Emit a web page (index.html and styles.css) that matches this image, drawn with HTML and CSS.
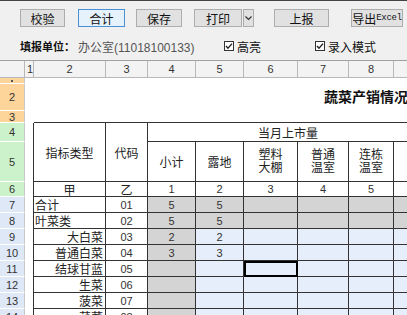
FILE: index.html
```html
<!DOCTYPE html>
<html>
<head>
  <meta charset="UTF-8">
  <title>蔬菜产销情况表</title>
  <link rel="stylesheet" href="styles.css">
</head>
<body>
  <div class="toolbar">
    <div class="btn-row">
      <button class="btn w-check">校验</button>
      <button class="btn active w-sum">合计</button>
      <button class="btn w-save">保存</button>
      <button class="btn w-print">打印</button>
      <button class="btn w-drop"><svg width="7" height="5" viewBox="0 0 7 5"><path d="M0.5 0.5 L3.5 3.5 L6.5 0.5" fill="none" stroke="#333" stroke-width="1.2"/></svg></button>
      <button class="btn w-report">上报</button>
      <button class="btn w-export">导出<span class="mono">Excel</span></button>
    </div>
    <div class="info-row">
      <span class="unit-label">填报单位：</span>
      <span class="unit-name">办公室(11018100133)</span>
      <span class="chk chk-hl"><svg width="10" height="10" viewBox="0 0 10 10"><rect x="0.5" y="0.5" width="9" height="9" fill="#fff" stroke="#333"/><path d="M2 5 L4 7.2 L8 2.6" fill="none" stroke="#222" stroke-width="1.4"/></svg>高亮</span>
      <span class="chk"><svg width="10" height="10" viewBox="0 0 10 10"><rect x="0.5" y="0.5" width="9" height="9" fill="#fff" stroke="#333"/><path d="M2 5 L4 7.2 L8 2.6" fill="none" stroke="#222" stroke-width="1.4"/></svg>录入模式</span>
    </div>
  </div>

  <div class="sheet">
    <!-- заголовки столбцов -->
    <div class="ch corner"></div>
    <div class="ch ch-first">1</div>
    <div class="ch">2</div>
    <div class="ch">3</div>
    <div class="ch">4</div>
    <div class="ch">5</div>
    <div class="ch">6</div>
    <div class="ch">7</div>
    <div class="ch">8</div>
    <div class="ch"></div>

    <!-- строки 1-3 над таблицей -->
    <div class="rh orange tiny"></div>
    <div class="gap-col top"></div>
    <div class="blank span-all"></div>
    <div class="rh orange">2</div>
    <div class="title span-all">蔬菜产销情况</div>
    <div class="rh orange">3</div>
    <div class="blank span-all table-top"></div>

    <!-- шапка таблицы -->
    <div class="rh green">4</div>
    <div class="gap-col body"></div>
    <div class="c head-2">指标类型</div>
    <div class="c head-2">代码</div>
    <div class="c month">当月上市量</div>
    <div class="rh green">5</div>
    <div class="c">小计</div>
    <div class="c">露地</div>
    <div class="c two">塑料<br>大棚</div>
    <div class="c two">普通<br>温室</div>
    <div class="c two">连栋<br>温室</div>
    <div class="c"></div>
    <div class="rh green">6</div>
    <div class="c">甲</div>
    <div class="c">乙</div>
    <div class="c num">1</div>
    <div class="c num">2</div>
    <div class="c num">3</div>
    <div class="c num">4</div>
    <div class="c num">5</div>
    <div class="c"></div>

    <!-- данные -->
    <div class="rh blue">7</div>
    <div class="c l">合计</div>
    <div class="c num">01</div>
    <div class="c num g">5</div>
    <div class="c num g">5</div>
    <div class="c g"></div>
    <div class="c g"></div>
    <div class="c g"></div>
    <div class="c g"></div>

    <div class="rh blue">8</div>
    <div class="c l">叶菜类</div>
    <div class="c num">02</div>
    <div class="c num g">5</div>
    <div class="c num g">5</div>
    <div class="c g"></div>
    <div class="c g"></div>
    <div class="c g"></div>
    <div class="c g"></div>

    <div class="rh blue">9</div>
    <div class="c r">大白菜</div>
    <div class="c num">03</div>
    <div class="c num g">2</div>
    <div class="c num b">2</div>
    <div class="c b"></div>
    <div class="c b"></div>
    <div class="c b"></div>
    <div class="c b"></div>

    <div class="rh blue">10</div>
    <div class="c r">普通白菜</div>
    <div class="c num">04</div>
    <div class="c num g">3</div>
    <div class="c num b">3</div>
    <div class="c b"></div>
    <div class="c b"></div>
    <div class="c b"></div>
    <div class="c b"></div>

    <div class="rh blue">11</div>
    <div class="c r">结球甘蓝</div>
    <div class="c num">05</div>
    <div class="c g"></div>
    <div class="c b"></div>
    <div class="c b selected"></div>
    <div class="c b"></div>
    <div class="c b"></div>
    <div class="c b"></div>

    <div class="rh blue">12</div>
    <div class="c r">生菜</div>
    <div class="c num">06</div>
    <div class="c g"></div>
    <div class="c b"></div>
    <div class="c b"></div>
    <div class="c b"></div>
    <div class="c b"></div>
    <div class="c b"></div>

    <div class="rh blue">13</div>
    <div class="c r">菠菜</div>
    <div class="c num">07</div>
    <div class="c g"></div>
    <div class="c b"></div>
    <div class="c b"></div>
    <div class="c b"></div>
    <div class="c b"></div>
    <div class="c b"></div>

    <div class="rh blue">14</div>
    <div class="c r">芹菜</div>
    <div class="c num">08</div>
    <div class="c g"></div>
    <div class="c b"></div>
    <div class="c b"></div>
    <div class="c b"></div>
    <div class="c b"></div>
    <div class="c b"></div>
  </div>
</body>
</html>
```

FILE: styles.css
```css
/* Общие стили */
* {
  box-sizing: border-box;
}

body {
  margin: 0;
  width: 407px;
  height: 315px;
  overflow: hidden;
  font-family: "Liberation Sans", "Noto Sans CJK SC", sans-serif;
  font-size: 12px;
  color: #222;
  background-color: #fff;
}

/* Панель кнопок */
.toolbar {
  height: 60px;
  background-color: #f0f0f0;
  border-top: 1px solid #444;
}

.btn-row {
  display: flex;
  padding: 8px 0 0 20px;
}

.btn {
  display: flex;
  align-items: center;
  justify-content: center;
  height: 18px;
  padding: 0;
  border: 1px solid #adadad;
  background-color: #e1e1e1;
  font-family: inherit;
  font-size: 12px;
  color: #111;
}

.btn.active {
  border-color: #4a90d9;
  background-color: #e5f1fb;
}

.w-check { width: 45px; }
.w-sum { width: 47px; margin-left: 13px; }
.w-save { width: 46px; margin-left: 11px; }
.w-print { width: 48px; margin-left: 12px; }
.w-drop { width: 11px; margin-left: 1px; }
.w-report { width: 55px; margin-left: 20px; }
.w-export { width: 52px; margin-left: 22px; }

.mono {
  font-family: "Liberation Mono", monospace;
  font-size: 9px;
  letter-spacing: -0.3px;
}

.info-row {
  display: flex;
  align-items: center;
  height: 16px;
  margin-top: 11px;
  padding-left: 20px;
  white-space: nowrap;
}

.unit-label {
  width: 58px;
  font-size: 11px;
  font-weight: bold;
  color: #111;
}

.unit-name {
  width: 146px;
  color: #555;
}

.chk {
  display: flex;
  align-items: center;
  gap: 3px;
  color: #111;
}

.chk-hl {
  width: 91px;
}

/* Лист */
.sheet {
  display: grid;
  grid-template-columns: 25px 9px 72px 42px 48px 48px 54px 51px 45px 35px;
  grid-template-rows: 17px 6px 27px 12px 19px 40px 15px repeat(8, 16px);
  border-top: 1px solid #a0a0a0;
}

.ch {
  display: flex;
  align-items: center;
  justify-content: center;
  background-color: #f3f3f3;
  border-right: 1px solid #b8b8b8;
  border-bottom: 1px solid #b8b8b8;
  font-size: 11px;
  color: #333;
}

.ch-first {
  justify-content: flex-start;
  padding-left: 2px;
}

.rh {
  display: flex;
  align-items: center;
  justify-content: center;
  border-right: 1px solid #c8c8c8;
  border-bottom: 1px solid #fff;
  font-size: 11px;
  color: #333;
  overflow: hidden;
}

.rh.tiny::after {
  content: "";
  width: 2px;
  height: 2px;
  background-color: #555;
}

.orange { background-color: #fdd49a; }
.green { background-color: #ccf2cc; }
.blue { background-color: #dfe8f6; }

.gap-col.top {
  grid-row: span 3;
}

.gap-col.body {
  grid-row: span 11;
  border-right: 1px solid #333;
}

.span-all {
  grid-column: span 8;
}

.table-top {
  border-bottom: 1px solid #333;
}

.title {
  padding-left: 290px;
  line-height: 27px;
  font-size: 14px;
  font-weight: bold;
  white-space: nowrap;
  color: #111;
}

/* Ячейки таблицы */
.c {
  display: flex;
  align-items: center;
  justify-content: center;
  border-right: 1px solid #333;
  border-bottom: 1px solid #333;
  color: #222;
  white-space: nowrap;
}

.c.head-2 {
  grid-row: span 2;
}

.c.month {
  grid-column: span 6;
}

.c.two {
  line-height: 13px;
  text-align: center;
}

.c.num {
  font-size: 11px;
  color: #333;
}

.c.l {
  justify-content: flex-start;
  padding-left: 1px;
}

.c.r {
  justify-content: flex-end;
  padding-right: 2px;
}

.g { background-color: #d4d4d4; }
.b { background-color: #e6edfb; }

.selected {
  outline: 2px solid #000;
  outline-offset: -2px;
}
```
